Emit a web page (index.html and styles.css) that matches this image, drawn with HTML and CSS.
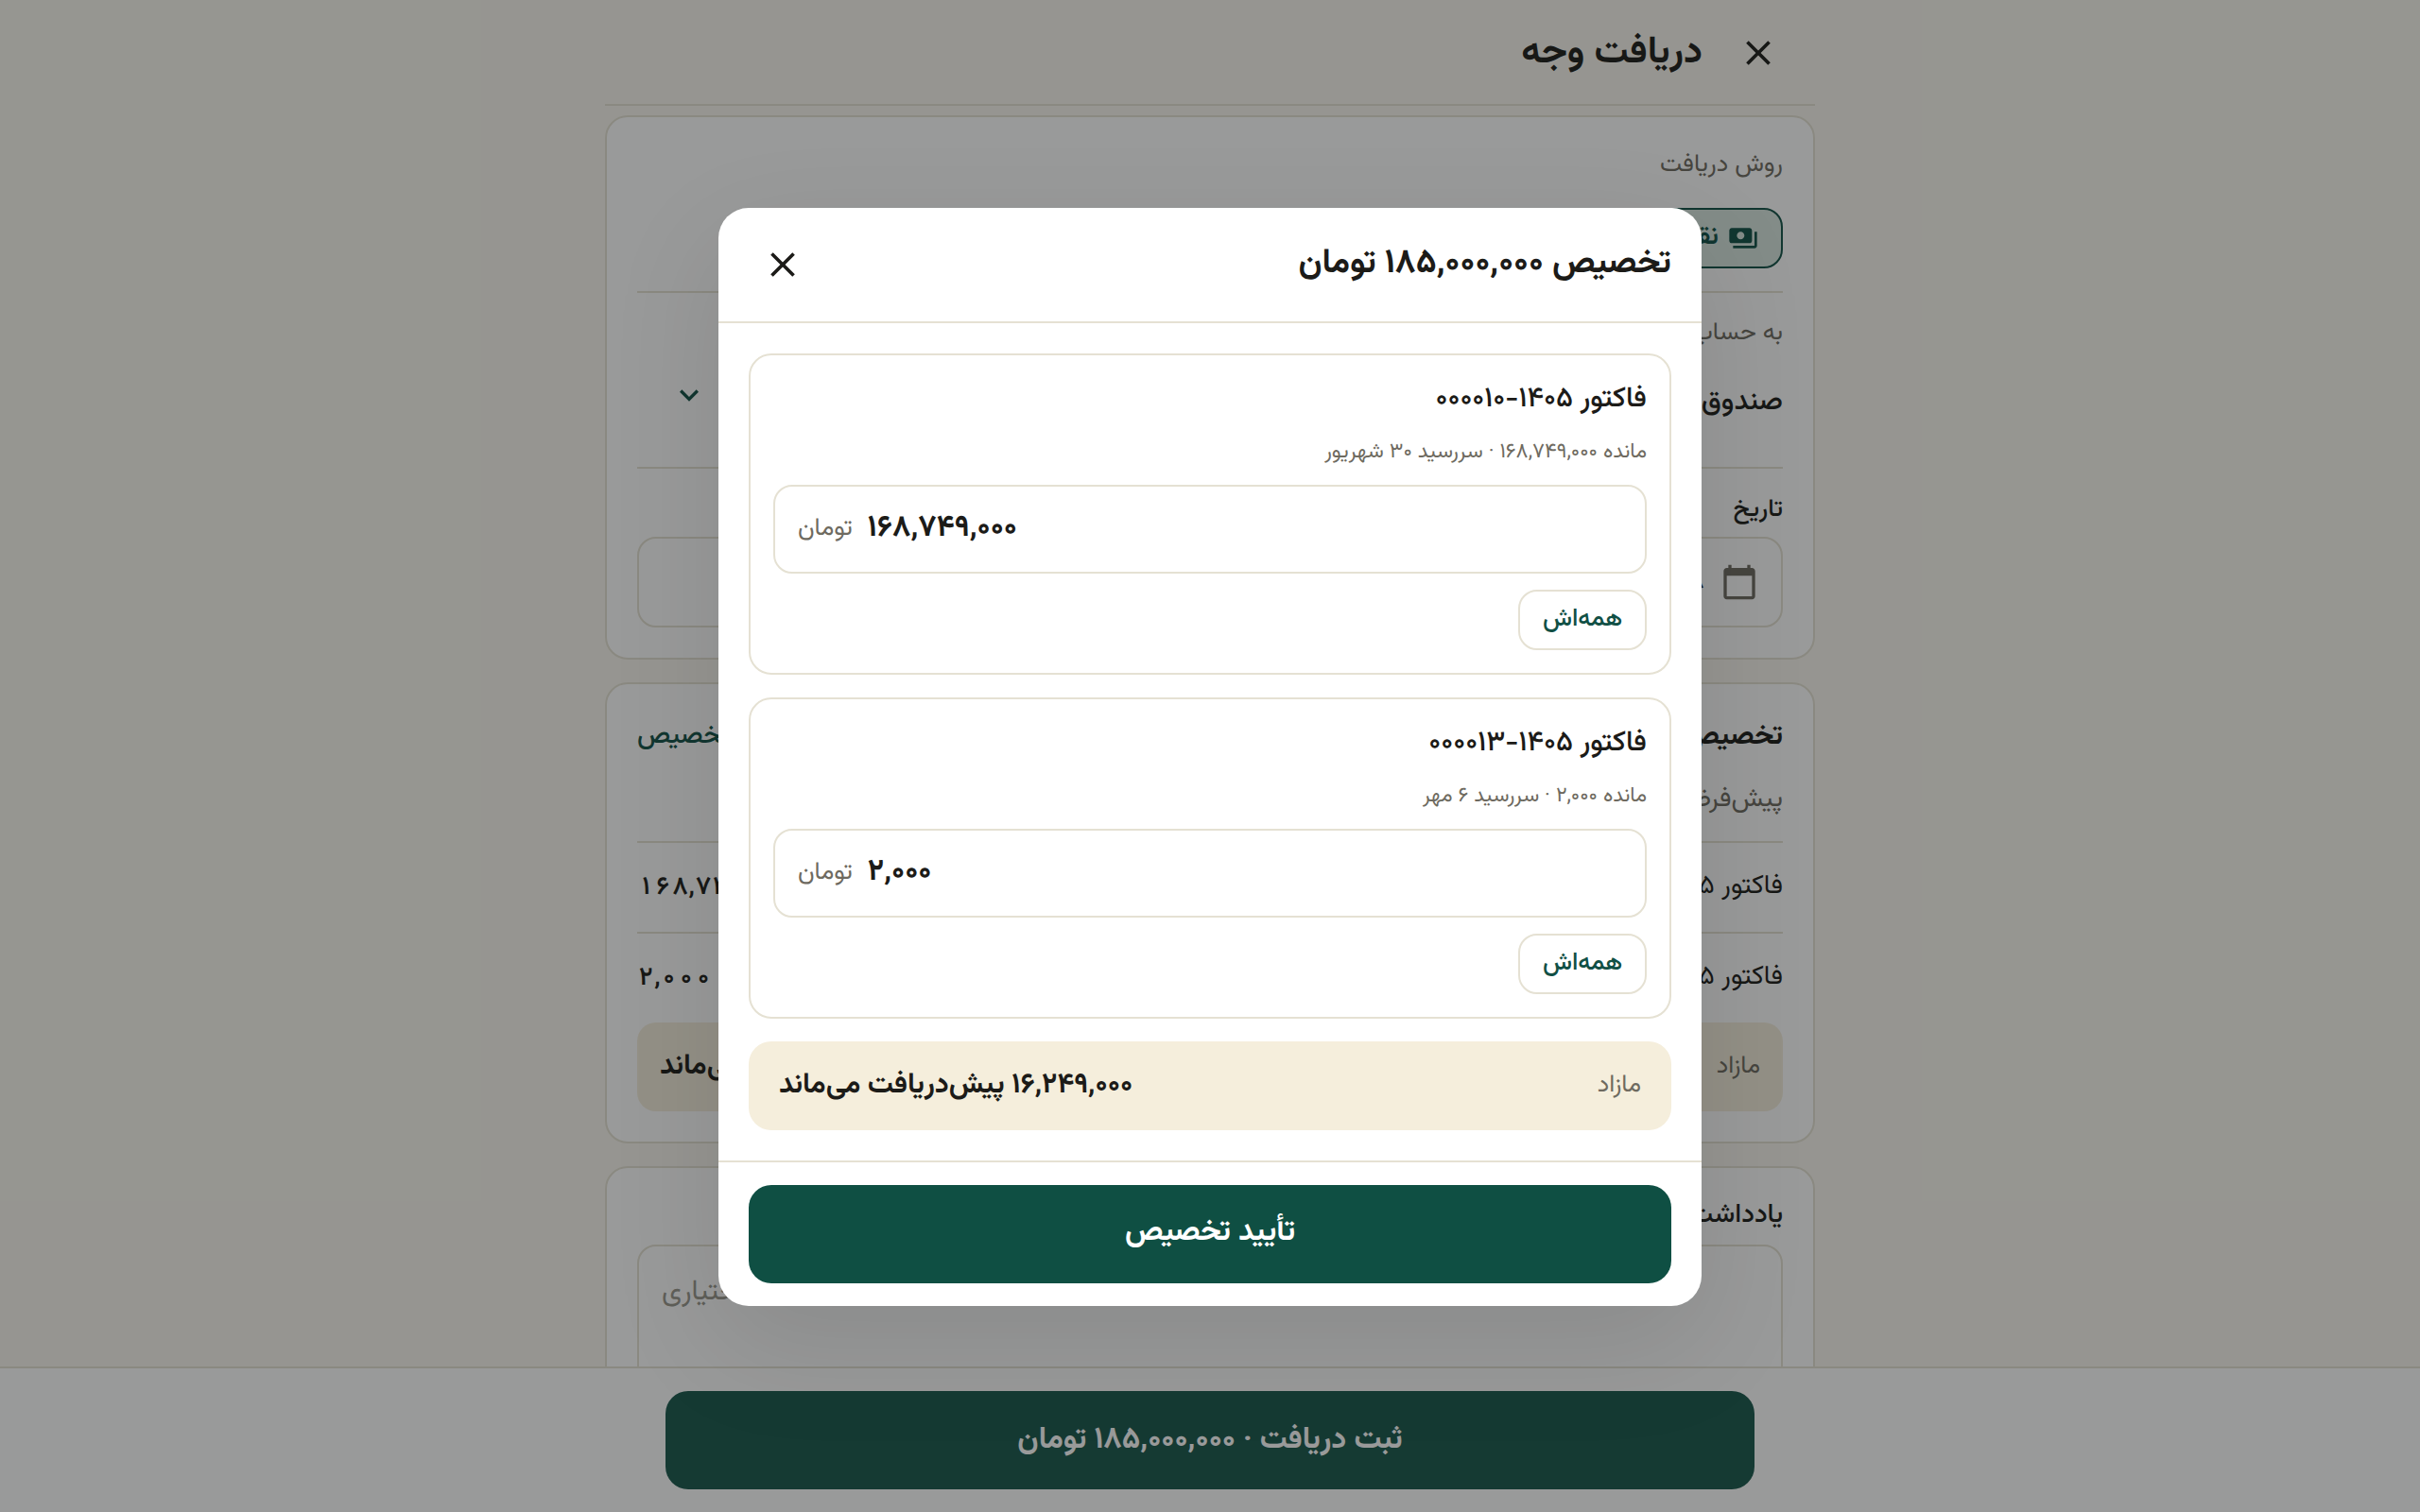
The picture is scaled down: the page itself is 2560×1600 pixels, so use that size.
FILE: index.html
```html
<!DOCTYPE html>
<html lang="fa" dir="rtl">
<head>
<meta charset="utf-8">
<title>دریافت وجه</title>
<link rel="stylesheet" href="styles.css">
</head>
<body>
<main class="page">
  <header class="top">
    <button class="iconbtn top-close" aria-label="بستن"><svg viewBox="0 0 24 24" class="ic-close"><path d="M19 6.41 17.59 5 12 10.59 6.41 5 5 6.41 10.59 12 5 17.59 6.41 19 12 13.41 17.59 19 19 17.59 13.41 12z"/></svg></button>
    <h1 class="top-title">دریافت وجه</h1>
  </header>

  <section class="card method">
    <div class="label l1">روش دریافت</div>
    <div class="chips"><div class="chip"><svg viewBox="0 0 24 24" class="ic-cash"><path d="M19 14V6c0-1.1-.9-2-2-2H3c-1.1 0-2 .9-2 2v8c0 1.1.9 2 2 2h14c1.1 0 2-.9 2-2zm-9-1c-1.66 0-3-1.34-3-3s1.34-3 3-3 3 1.34 3 3-1.34 3-3 3zm13-6v11c0 1.1-.9 2-2 2H4v-2h17V7h2z"/></svg><span>نقد</span></div></div>
    <div class="acct">
      <div class="label">به حساب</div>
      <div class="acct-row"><span class="acct-name">صندوق اصلی</span><svg viewBox="0 0 24 24" class="ic-chev"><path d="M16.59 8.59 12 13.17 7.41 8.59 6 10l6 6 6-6z"/></svg></div>
    </div>
    <div class="date-label">تاریخ</div>
    <div class="date-input"><svg viewBox="0 0 24 24" class="ic-cal"><path d="M20 3h-1V1h-2v2H7V1H5v2H4c-1.1 0-2 .9-2 2v16c0 1.1.9 2 2 2h16c1.1 0 2-.9 2-2V5c0-1.1-.9-2-2-2zm0 18H4V8h16v13z"/></svg><span class="date-text">۲۸ مرداد ۱۴۰۵</span></div>
  </section>

  <section class="card alloc">
    <div class="alloc-head"><strong>تخصیص به فاکتورها</strong><span class="link">ویرایش تخصیص</span></div>
    <div class="alloc-sub">پیش‌فرض: قدیمی‌ترین فاکتورها</div>
    <div class="row"><span>فاکتور ۱۴۰۵-۰۰۰۰۱۰</span><b class="amt">۱۶۸,۷۴۹,۰۰۰</b></div>
    <div class="row row-last"><span>فاکتور ۱۴۰۵-۰۰۰۰۱۳</span><b class="amt">۲,۰۰۰</b></div>
    <div class="excess bg-excess"><span>مازاد</span><b>۱۶,۲۴۹,۰۰۰ پیش‌دریافت می‌ماند</b></div>
  </section>

  <section class="card note">
    <div class="date-label note-label">یادداشت</div>
    <div class="textarea">یادداشت اختیاری</div>
  </section>
</main>

<footer class="bar"><button class="primary bar-btn">ثبت دریافت · ۱۸۵,۰۰۰,۰۰۰ تومان</button></footer>

<div class="overlay">
  <div class="modal">
    <div class="modal-head">
      <h2>تخصیص ۱۸۵,۰۰۰,۰۰۰ تومان</h2>
      <button class="iconbtn" aria-label="بستن"><svg viewBox="0 0 24 24" class="ic-close dark"><path d="M19 6.41 17.59 5 12 10.59 6.41 5 5 6.41 10.59 12 5 17.59 6.41 19 12 13.41 17.59 19 19 17.59 13.41 12z"/></svg></button>
    </div>
    <div class="modal-body">
      <article class="inv">
        <h3>فاکتور ۱۴۰۵-۰۰۰۰۱۰</h3>
        <p>مانده ۱۶۸,۷۴۹,۰۰۰ · سررسید ۳۰ شهریور</p>
        <div class="field"><span class="unit">تومان</span><span class="val">۱۶۸,۷۴۹,۰۰۰</span></div>
        <div class="all"><button class="allbtn">همه‌اش</button></div>
      </article>
      <article class="inv">
        <h3>فاکتور ۱۴۰۵-۰۰۰۰۱۳</h3>
        <p>مانده ۲,۰۰۰ · سررسید ۶ مهر</p>
        <div class="field"><span class="unit">تومان</span><span class="val">۲,۰۰۰</span></div>
        <div class="all"><button class="allbtn">همه‌اش</button></div>
      </article>
      <div class="excess"><span>مازاد</span><b>۱۶,۲۴۹,۰۰۰ پیش‌دریافت می‌ماند</b></div>
    </div>
    <div class="modal-foot"><button class="primary confirm">تأیید تخصیص</button></div>
  </div>
</div>
</body>
</html>
```
FILE: styles.css
```css
* { box-sizing: border-box; margin: 0; padding: 0; }
html, body { height: 100%; overflow: hidden; }
body {
  width: 2560px; height: 1600px; position: relative;
  background: #faf7ef; color: #1c1b18;
  font-family: "Vazirmatn", "Noto Sans Arabic", "Noto Sans", "DejaVu Sans", sans-serif;
  font-size: 28px;
  text-rendering: geometricPrecision;
}
button { font: inherit; border: 0; background: none; color: inherit; }
svg { display: block; fill: currentColor; }
.page { width: 1280px; margin: 0 auto; height: 1600px; overflow: hidden; }
.top { height: 112px; display: flex; align-items: center; border-bottom: 2px solid #e5e1d3; padding: 2px 30px 0 0; gap: 29px; }
.top-title { font-size: 40px; font-weight: 740; padding-top: 2px; }
.iconbtn { width: 60px; height: 60px; display: flex; align-items: center; justify-content: center; }
.ic-close { width: 44px; height: 44px; }
.card { background: #fff; border: 2px solid #e5e1d3; border-radius: 24px; padding: 0 32px; margin-bottom: 24px; }
.top + .card { margin-top: 10px; }
.label { color: #6e6a60; font-size: 26px; }
.method { height: 576px; }
.l1 { height: 96px; padding-top: 31px; line-height: 40px; }
.chips { display: flex; height: 90px; border-bottom: 2px solid #e5e1d3; align-items: flex-start; }
.chip { display: flex; height: 64px; align-items: center; gap: 10px; padding: 0 24px; border: 2px solid #115045; border-radius: 20px; background: #d9e6e0; color: #115045; font-weight: 600; }
.ic-cash { width: 32px; height: 32px; }
.acct { height: 186px; border-bottom: 2px solid #e5e1d3; padding-top: 23px; }
.acct .label { line-height: 40px; }
.acct-row { display: flex; align-items: center; justify-content: space-between; margin-top: 23px; height: 60px; }
.acct-name { font-weight: 500; font-size: 30px; }
.ic-chev { width: 40px; height: 40px; color: #115045; margin-left: 35px; margin-top: -16px; }
.date-label { line-height: 40px; padding-top: 24px; height: 72px; font-weight: 500; font-size: 26px; }
.date-input { height: 96px; border: 2px solid #e5e1d3; border-radius: 20px; display: flex; align-items: center; gap: 17px; padding: 0 24px; }
.ic-cal { width: 40px; height: 40px; color: #6e6a60; }
.alloc { height: 488px; }
.alloc-head { display: flex; justify-content: space-between; align-items: center; height: 66px; margin-top: 23px; }
.alloc-head strong { font-size: 30px; font-weight: 740; }
.link { color: #115045; font-weight: 500; }
.alloc-sub { color: #6e6a60; height: 79px; line-height: 68px; border-bottom: 2px solid #e5e1d3; }
.row { display: flex; justify-content: space-between; align-items: center; height: 96px; border-bottom: 2px solid #e5e1d3; }
.row-last { height: 94px; border-bottom: 0; }
.amt { font-size: 27px; font-weight: 600; font-variant-numeric: tabular-nums; }
.excess { display: flex; justify-content: space-between; align-items: center; height: 94px; padding: 0 32px; border-radius: 24px; background: #f5eedc; }
.excess span { color: #6e6a60; font-size: 26px; margin-bottom: 2px; }
.excess b { font-size: 30px; font-weight: 740; }
.bg-excess { padding: 0 24px; border-radius: 20px; }
.note { height: 400px; }
.note-label { height: 81px; padding-top: 31px; font-size: 28px; }
.textarea { height: 300px; border: 2px solid #e5e1d3; border-radius: 20px; padding: 26px 24px; color: #9a978e; text-align: left; line-height: 48px; font-size: 30px; }
.bar { position: absolute; left: 0; right: 0; bottom: 0; height: 154px; background: #fff; border-top: 2px solid #e5e1d3; display: flex; justify-content: center; padding-top: 24px; }
.primary { background: #0f4f43; color: #fff; font-weight: 740; }
.bar-btn { width: 1152px; height: 104px; border-radius: 24px; font-size: 32px; background: #18564b; }
.overlay { position: absolute; inset: 0; background: rgba(18, 22, 20, .43); display: flex; justify-content: center; padding-top: 220px; }
.modal { width: 1040px; height: 1162px; background: #fff; border-radius: 32px; box-shadow: 0 40px 120px rgba(0,0,0,.1); display: flex; flex-direction: column; }
.modal-head { height: 122px; flex: none; border-bottom: 2px solid #e5e1d3; display: flex; align-items: center; justify-content: space-between; padding: 0 32px 0 38px; }
.modal-head h2 { font-size: 36px; font-weight: 740; }
.modal-body { flex: none; padding: 32px 32px 32px; display: flex; flex-direction: column; gap: 24px; border-bottom: 2px solid #e5e1d3; }
.inv { height: 340px; border: 2px solid #e5e1d3; border-radius: 24px; padding: 0 24px; }
.inv h3 { font-size: 30px; font-weight: 500; line-height: 44px; padding-top: 26px; height: 68px; }
.inv p { font-size: 22.2px; color: #6e6a60; line-height: 36px; margin-top: 17px; height: 52px; }
.field { direction: ltr; height: 94px; border: 2px solid #e5e1d3; border-radius: 20px; display: flex; align-items: center; gap: 16px; padding: 0 24px; }
.unit { color: #6e6a60; font-size: 26px; margin-bottom: 2px; }
.val { font-size: 32px; font-weight: 740; }
.all { display: flex; margin-top: 17px; }
.allbtn { width: 136px; height: 64px; border: 2px solid #e5e1d3; border-radius: 20px; color: #115045; font-weight: 500; font-size: 26px; padding-bottom: 2px; }
.modal-foot { padding: 24px 32px; }
.confirm { width: 100%; height: 104px; border-radius: 24px; font-size: 32px; padding-bottom: 4px; }
```
